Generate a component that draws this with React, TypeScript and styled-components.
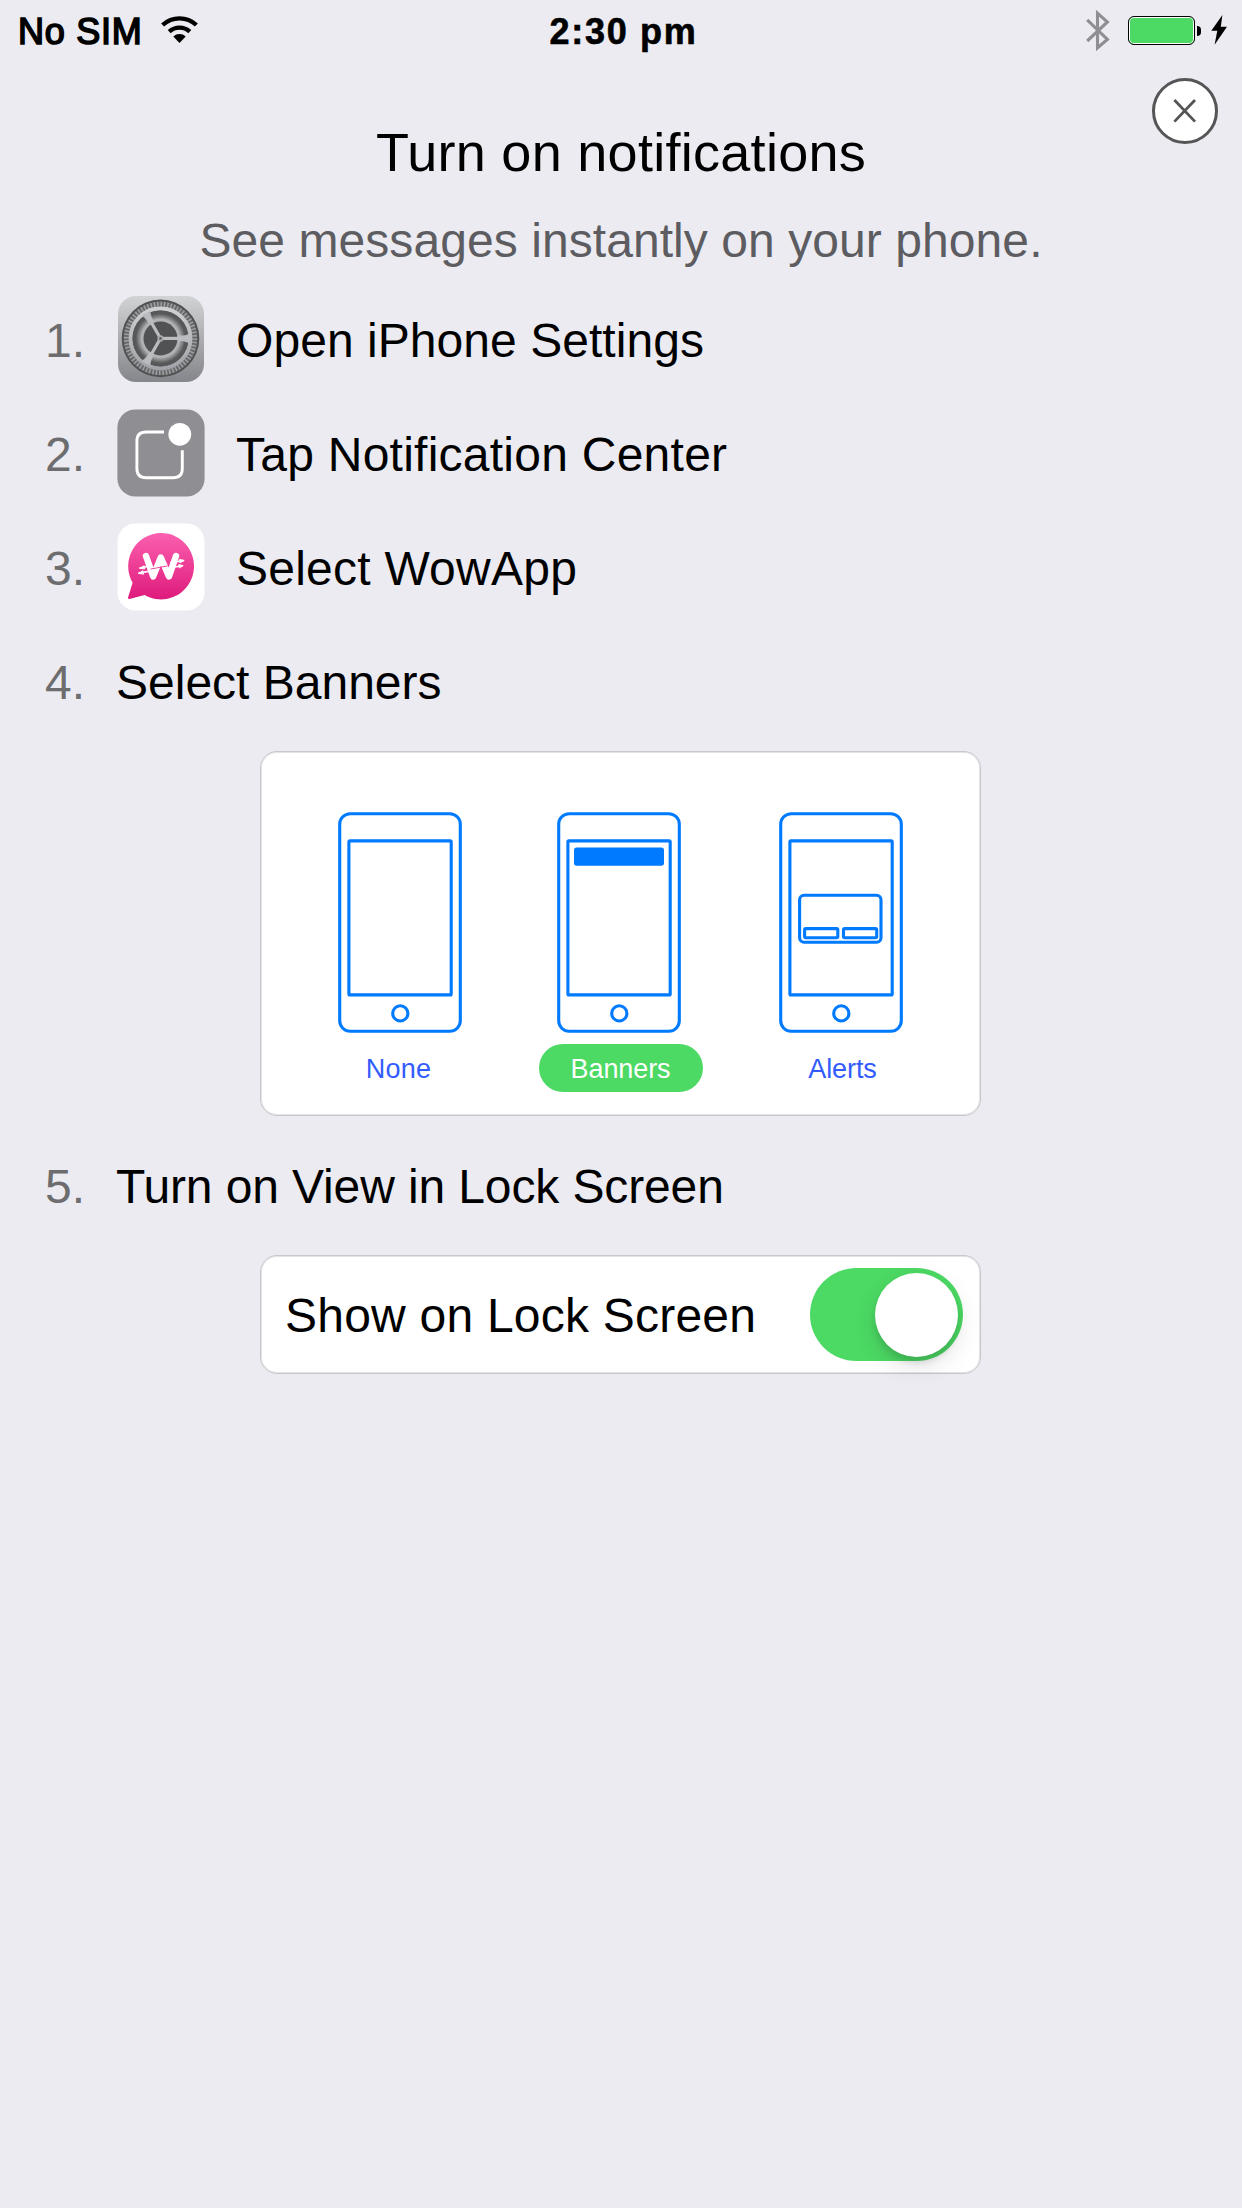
import React from 'react';
import styled, { createGlobalStyle } from 'styled-components';

const GlobalStyle = createGlobalStyle`
  *, *::before, *::after { box-sizing: border-box; }
  html, body { margin: 0; background: #ebebf1; }
  body { font-family: 'Liberation Sans', Arial, sans-serif; color: #000; }
  svg { display: block; flex: none; }
`;

const Screen = styled.main`
  display: flex;
  flex-direction: column;
  width: 1242px;
  height: 2208px;
  background: #ebebf1;
  overflow: hidden;
`;

const StatusBar = styled.header`
  display: grid;
  grid-template-columns: 1fr auto 1fr;
  height: 63px;
  font-size: 36px;
  line-height: 63px;
  white-space: nowrap;
`;

const Carrier = styled.div`
  display: flex;
  align-items: flex-start;
  gap: 18px;
  padding-left: 18px;
  letter-spacing: 0.75px;
  -webkit-text-stroke: 1.6px #000;

  svg { margin-top: 16px; }
`;

const Clock = styled.time`
  padding-left: 5px;
  font-weight: 700;
  letter-spacing: 1.7px;
  -webkit-text-stroke: 0.6px #000;
`;

const Indicators = styled.div`
  display: flex;
  justify-content: flex-end;
  align-items: flex-start;
  padding: 10px 14px 0 0;
`;

const Battery = styled.div`
  display: flex;
  align-items: center;
  gap: 2px;
  height: 29px;
  margin: 6px 9px 0 18px;
`;

const BatteryBody = styled.div`
  width: 67px;
  height: 29px;
  border: 1px solid #000;
  border-radius: 6px;
  background: #4cd964;
  box-shadow: inset 0 0 0 1px #fff;
`;

const BatteryCap = styled.div`
  width: 4px;
  height: 10px;
  margin-top: 1px;
  border-radius: 0 4px 4px 0;
  background: #000;
`;

const BoltSlot = styled.div`
  padding-top: 5px;
`;

const Heading = styled.section`
  display: grid;
  grid-template-columns: 1fr auto 1fr;
  height: 149px;
  padding: 15px 24px 0;
`;

const Title = styled.h1`
  grid-column: 2;
  margin: 43px 0 0;
  font-size: 54px;
  font-weight: 400;
  line-height: 62px;
  letter-spacing: 0.28px;
`;

const CloseButton = styled.button`
  display: flex;
  align-items: center;
  justify-content: center;
  justify-self: end;
  width: 66px;
  height: 66px;
  padding: 0;
  border: 3px solid #555557;
  border-radius: 50%;
  background: #fff;
`;

const Subtitle = styled.p`
  height: 70px;
  margin: 0;
  font-size: 48px;
  line-height: 57px;
  letter-spacing: 0.07px;
  text-align: center;
  color: #5c5c61;
`;

const Steps = styled.ol`
  margin: 0;
  padding: 0;
  list-style: none;
`;

const StepRow = styled.div`
  display: flex;
  align-items: center;
  height: 114px;
  padding-left: 45px;
  font-size: 48px;
  line-height: 53px;
  white-space: nowrap;
`;

const StepNumber = styled.span`
  width: 71px;
  padding-top: 3px;
  color: #6d6d6f;
`;

const StepIcon = styled.span`
  display: flex;
  width: 120px;
  padding-left: 1px;
`;

const StepText = styled.span<{ $tracking?: number }>`
  padding-top: 3px;
  letter-spacing: ${(p) => p.$tracking ?? 0}px;
`;

const Card = styled.div`
  display: flex;
  justify-content: center;
  width: 721px;
  margin: 13px auto 12px 260px;
  border: 1px solid #c8c7cc;
  border-radius: 17px;
  background: #fff;
  box-shadow: inset 0 0 0 1px rgba(200, 199, 204, 0.5);
`;

const StyleCard = styled(Card)`
  height: 365px;
  padding-top: 60px;
`;

const StyleOption = styled.div<{ $shift: number }>`
  display: flex;
  flex-direction: column;
  align-items: center;
  gap: 11px;
  width: 222px;

  svg { margin-left: ${(p) => p.$shift}px; }
`;

const OptionLabel = styled.span<{ $selected?: boolean; $tracking: number }>`
  width: 164px;
  height: 48px;
  padding-top: 1px;
  border-radius: 24px;
  font-size: 27px;
  line-height: 48px;
  letter-spacing: ${(p) => p.$tracking}px;
  text-align: center;
  color: ${(p) => (p.$selected ? '#fff' : '#335cff')};
  background: ${(p) => (p.$selected ? '#4cd964' : 'transparent')};
`;

const LockCard = styled(Card)`
  align-items: center;
  justify-content: space-between;
  height: 119px;
  padding: 0 17px 0 24px;
  font-size: 48px;
  line-height: 53px;
  letter-spacing: 0.22px;
  white-space: nowrap;
`;

const LockLabel = styled.span`
  padding-top: 2px;
`;

const Toggle = styled.span`
  display: flex;
  align-items: center;
  justify-content: flex-end;
  width: 153px;
  height: 93px;
  padding-right: 5px;
  border-radius: 47px;
  background: #4cd964;
`;

const Knob = styled.span`
  width: 83px;
  height: 84px;
  border-radius: 50%;
  background: #fff;
  box-shadow: 0 9px 24px rgba(0, 0, 0, 0.12), 0 6px 6px rgba(0, 0, 0, 0.1);
`;

const WifiIcon = () => (
  <svg width="37" height="28" viewBox="0 0 37 28" fill="none" stroke="#000" strokeWidth="4.4">
    <path d="M1.6 9A25 25 0 0 1 35.4 9" />
    <path d="M8.2 15.6A15.4 15.4 0 0 1 28.8 15.6" />
    <path d="M18.5 27L12.3 20.4A9.4 9.4 0 0 1 24.7 20.4Z" fill="#000" stroke="none" />
  </svg>
);

const BluetoothIcon = () => (
  <svg width="24" height="42" viewBox="0 0 24 42" fill="none" stroke="#8e8e93" strokeWidth="3.1">
    <path d="M1.2 9.8L21.4 29.4L11.5 37.8V3.2L21.4 12L1.2 31" />
  </svg>
);

const BoltIcon = () => (
  <svg width="18" height="30" viewBox="0 0 18 30">
    <path d="M12.4 0L1.3 15.8H7.3L4.6 29.8L17 11.8H10.8Z" fill="#000" />
  </svg>
);

const CloseIcon = () => (
  <svg width="24" height="24" viewBox="0 0 24 24" stroke="#555557" strokeWidth="2.8">
    <path d="M1.4 1L22 22.6M22 1L1.4 22.6" />
  </svg>
);

const SPOKES = [0, 120, 240];

const SettingsIcon = () => (
  <svg width="88" height="88" viewBox="-1 -1 88 88">
    <defs>
      <linearGradient id="plate" x1="0" y1="0" x2="0" y2="1">
        <stop offset="0" stopColor="#d2d3d4" />
        <stop offset="1" stopColor="#85868b" />
      </linearGradient>
      <linearGradient id="rim" x1="0" y1="0" x2="0" y2="1">
        <stop offset="0" stopColor="#cfd0d2" />
        <stop offset="1" stopColor="#a2a3a8" />
      </linearGradient>
      <radialGradient id="track" gradientUnits="userSpaceOnUse" cx="0" cy="0" r="28.5">
        <stop offset="0.64" stopColor="#adaeb1" />
        <stop offset="0.74" stopColor="#8f9092" />
        <stop offset="0.86" stopColor="#5a5b5c" />
        <stop offset="1" stopColor="#525354" />
      </radialGradient>
    </defs>
    <rect width="86" height="86" rx="18" fill="url(#plate)" />
    <g transform="translate(42.5 42.4)">
      <circle r="38.8" fill="#505152" />
      <circle r="36.8" fill="#67686a" />
      <circle r="34.2" fill="none" stroke="#9d9ea1" strokeWidth="5" pathLength="128" strokeDasharray="0.9 1.1" />
      <circle r="29.9" fill="none" stroke="url(#rim)" strokeWidth="4" />
      <circle r="28" fill="url(#track)" />
      <circle r="18.4" fill="none" stroke="#b0b1b4" strokeWidth="2.8" />
      <circle r="17" fill="#515253" />
      {SPOKES.map((angle) => (
        <g key={angle} transform={`rotate(${angle})`}>
          <path d="M17 -3C22 -2.6 25 -3 29 -5V5C25 3 22 2.6 17 3Z" fill="#b8b9bc" />
          <path d="M1 0H29" stroke="#bcbdc0" strokeWidth="3.2" />
        </g>
      ))}
      <circle r="3.1" fill="#a9aaad" />
      <circle r="1.2" fill="#505152" />
    </g>
  </svg>
);

const NotificationIcon = () => (
  <svg width="88" height="88" viewBox="0 0 88 88">
    <rect x="0.4" y="0.4" width="87.2" height="87.2" rx="18" fill="#8f8e93" />
    <path
      d="M47 23H29Q19.9 23 19.9 32V59.7Q19.9 68.7 29 68.7H56.2Q65.3 68.7 65.3 59.7V41.2"
      fill="none"
      stroke="#fff"
      strokeWidth="2.9"
    />
    <circle cx="62.8" cy="25.3" r="11.4" fill="#fff" />
  </svg>
);

const WowAppIcon = () => (
  <svg width="88" height="88" viewBox="0 0 88 88">
    <defs>
      <linearGradient id="bubble" x1="0" y1="0" x2="0" y2="1">
        <stop offset="0" stopColor="#fb60ae" />
        <stop offset="1" stopColor="#de1a7c" />
      </linearGradient>
    </defs>
    <rect x="0.5" y="0.5" width="87" height="87" rx="18" fill="#fff" />
    <path
      d="M44 10A33 33.2 0 1 1 27.6 72L12.5 76Q10.6 76.2 11.2 74L15.6 59.8A33 33.2 0 0 1 44 10Z"
      fill="url(#bubble)"
    />
    <g fill="none" strokeLinecap="round" strokeLinejoin="round">
      <path d="M29 33L36.2 53.4L43.8 34.5L52 53.4L59 33" stroke="#fff" strokeWidth="6.4" />
      <path d="M34 46L50 43" stroke="#e93390" strokeWidth="0.9" />
      <g stroke="#fff" strokeWidth="1.6">
        <path d="M23 45L33 43M22 50L36 47.6" />
        <path d="M54 39.6L66 37.6M52 45L65 42.8" />
      </g>
      <g fill="#fff" stroke="#fff" strokeWidth="1">
        <path d="M21.8 50.2L26 47.8L26.6 50.8Z" />
        <path d="M23 45L27.2 42.8L27.6 45.6Z" />
        <path d="M66.8 37.4L62.6 36.4L63 39.4Z" />
        <path d="M65.8 42.6L61.8 41.6L62.2 44.6Z" />
      </g>
    </g>
  </svg>
);

type Preview = 'none' | 'banner' | 'alert';

const PhoneIcon = ({ preview }: { preview: Preview }) => (
  <svg width="124" height="221" viewBox="0 0 124 221" fill="none" stroke="#007aff" strokeWidth="3.1">
    <rect x="1.7" y="1.7" width="120.6" height="217.6" rx="10.5" />
    <rect x="10.9" y="28.9" width="102.3" height="154" rx="1" />
    <circle cx="62.3" cy="201.4" r="7.6" />
    {preview === 'banner' && (
      <rect x="17" y="35.4" width="90" height="18.3" rx="2.6" fill="#007aff" stroke="none" />
    )}
    {preview === 'alert' && (
      <>
        <rect x="20.6" y="83.3" width="81.4" height="47" rx="4.5" />
        <rect x="25.6" y="116.6" width="33.2" height="9.2" rx="1.2" />
        <rect x="64.5" y="116.6" width="33.2" height="9.2" rx="1.2" />
      </>
    )}
  </svg>
);

interface StepProps {
  number: number;
  text: string;
  tracking?: number;
  icon?: React.ReactNode;
  children?: React.ReactNode;
}

const Step = ({ number, text, tracking, icon, children }: StepProps) => (
  <li>
    <StepRow>
      <StepNumber>{number}.</StepNumber>
      {icon && <StepIcon>{icon}</StepIcon>}
      <StepText $tracking={tracking}>{text}</StepText>
    </StepRow>
    {children}
  </li>
);

interface Option {
  label: string;
  preview: Preview;
  shift: number;
  tracking: number;
  selected?: boolean;
}

const OPTIONS: Option[] = [
  { label: 'None', preview: 'none', shift: 2, tracking: 0.25 },
  { label: 'Banners', preview: 'banner', shift: -3, tracking: -0.1, selected: true },
  { label: 'Alerts', preview: 'alert', shift: -4, tracking: -0.1 },
];

export default function App() {
  return (
    <>
      <GlobalStyle />
      <Screen>
        <StatusBar>
          <Carrier>
            No SIM
            <WifiIcon />
          </Carrier>
          <Clock>2:30 pm</Clock>
          <Indicators>
            <BluetoothIcon />
            <Battery>
              <BatteryBody />
              <BatteryCap />
            </Battery>
            <BoltSlot>
              <BoltIcon />
            </BoltSlot>
          </Indicators>
        </StatusBar>

        <Heading>
          <Title>Turn on notifications</Title>
          <CloseButton aria-label="Close">
            <CloseIcon />
          </CloseButton>
        </Heading>
        <Subtitle>See messages instantly on your phone.</Subtitle>

        <Steps>
          <Step number={1} text="Open iPhone Settings" tracking={0.05} icon={<SettingsIcon />} />
          <Step number={2} text="Tap Notification Center" tracking={0.25} icon={<NotificationIcon />} />
          <Step number={3} text="Select WowApp" tracking={0.24} icon={<WowAppIcon />} />
          <Step number={4} text="Select Banners">
            <StyleCard>
              {OPTIONS.map((option) => (
                <StyleOption key={option.label} $shift={option.shift}>
                  <PhoneIcon preview={option.preview} />
                  <OptionLabel $selected={option.selected} $tracking={option.tracking}>
                    {option.label}
                  </OptionLabel>
                </StyleOption>
              ))}
            </StyleCard>
          </Step>
          <Step number={5} text="Turn on View in Lock Screen" tracking={-0.12}>
            <LockCard>
              <LockLabel>Show on Lock Screen</LockLabel>
              <Toggle role="switch" aria-checked="true">
                <Knob />
              </Toggle>
            </LockCard>
          </Step>
        </Steps>
      </Screen>
    </>
  );
}
